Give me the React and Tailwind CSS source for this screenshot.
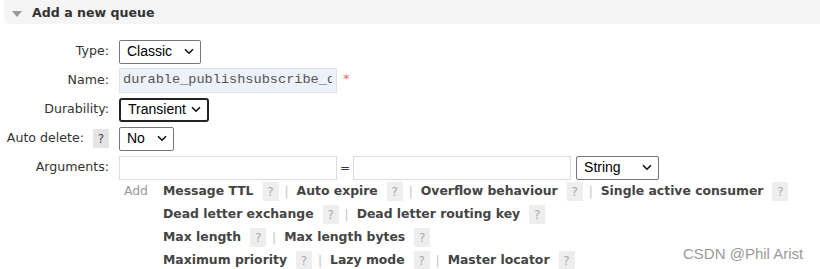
import React from 'react';

const verdana = { fontFamily: '"DejaVu Sans", Verdana, sans-serif' };

function Help({ dark }) {
  return (
    <span
      className={`inline-flex items-center justify-center w-[16px] h-[19px] text-[12px] ${
        dark ? 'bg-[#e4e4e4] text-[#444]' : 'bg-[#eeeeee] text-[#aaaaaa]'
      }`}
    >
      ?
    </span>
  );
}

function Sep() {
  return <span className="text-[#c4c4c4] text-[12px] ml-[6px] mr-[8px]">|</span>;
}

function Link({ children }) {
  return <span className="font-bold text-[#444] text-[12.4px] mr-[9px]">{children}</span>;
}

function Select({ value, w, focused }) {
  return (
    <div
      className={`flex items-center justify-between h-[24px] pl-[7px] pr-[6px] bg-white text-[14px] text-black font-['Liberation_Sans',Arial,sans-serif] ${w} ${
        focused ? 'border-2 border-[#222] rounded-[3px]' : 'border border-[#767676] rounded-[2px]'
      }`}
    >
      <span>{value}</span>
      <svg width="10" height="7" viewBox="0 0 10 7" fill="none">
        <path d="M1 1.2 5 5.2 9 1.2" stroke="#111" strokeWidth="1.6" />
      </svg>
    </div>
  );
}

function Row({ label, help, children }) {
  return (
    <div className="flex items-center h-[29px]">
      <div className="w-[109px] flex items-center justify-end gap-[9px] text-[12.6px] text-[#333]">
        <span>{label}</span>
        {help && <Help dark />}
      </div>
      <div className="flex items-center ml-[10px]">{children}</div>
    </div>
  );
}

export default function App() {
  const lines = [
    ['Message TTL', 'Auto expire', 'Overflow behaviour', 'Single active consumer'],
    ['Dead letter exchange', 'Dead letter routing key'],
    ['Max length', 'Max length bytes'],
    ['Maximum priority', 'Lazy mode', 'Master locator'],
  ];

  return (
    <div className="w-[820px] h-[269px] bg-white overflow-hidden relative" style={verdana}>
      <div className="ml-[4px] h-[24px] pt-[3px] bg-[#f5f5f5] rounded-bl-[6px] flex items-center">
        <svg width="10" height="7" viewBox="0 0 10 7" className="ml-[8px] mt-[1px]">
          <path d="M0 0h10L5 6z" fill="#9a9a9a" />
        </svg>
        <span className="ml-[10px] font-bold text-[12.6px] text-[#333]">Add a new queue</span>
      </div>

      <div className="mt-[13px]">
        <Row label="Type:">
          <Select value="Classic" w="w-[82px]" />
        </Row>
        <Row label="Name:">
          <div className="h-[25px] w-[218px] bg-[#edf1fa] border border-[#dde2ee] flex items-center pl-[3px] pr-[4px]">
            <div className="overflow-hidden whitespace-nowrap text-[13.6px] text-[#555] font-['Liberation_Mono','Courier_New',monospace]">
              durable_publishsubscribe_queue
            </div>
          </div>
          <span className="ml-[6px] text-[#e07070] text-[13px] mt-[-4px]">*</span>
        </Row>
        <Row label="Durability:">
          <Select value="Transient" w="w-[90px]" focused />
        </Row>
        <Row label="Auto delete:" help>
          <Select value="No" w="w-[55px]" />
        </Row>
        <Row label="Arguments:">
          <div className="h-[24px] w-[218px] border border-[#dddddd] bg-white" />
          <span className="mx-[3px] text-[12px] text-[#333]">=</span>
          <div className="h-[24px] w-[218px] border border-[#dddddd] bg-white" />
          <div className="ml-[5px]">
            <Select value="String" w="w-[83px]" />
          </div>
        </Row>
      </div>

      <div className="flex mt-[-2px]">
        <div className="w-[163px] pl-[124px] text-[12.4px] text-[#999] h-[23px] flex items-center">Add</div>
        <div className="flex flex-col">
          {lines.map((items, i) => (
            <div key={i} className="h-[23px] flex items-center">
              {items.map((t, j) => (
                <span key={t} className="flex items-center">
                  <Link>{t}</Link>
                  <Help />
                  {j < items.length - 1 && <Sep />}
                </span>
              ))}
            </div>
          ))}
        </div>
      </div>

      <div className="absolute left-[683px] top-[243px] text-[15px] text-[#9a9a9a] font-['Liberation_Sans',Arial,sans-serif]">
        CSDN @Phil Arist
      </div>
    </div>
  );
}
